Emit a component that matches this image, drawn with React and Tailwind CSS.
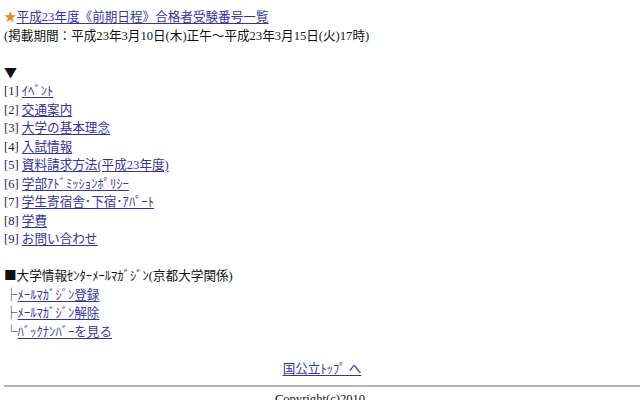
const menu = [
  "ｲﾍﾞﾝﾄ",
  "交通案内",
  "大学の基本理念",
  "入試情報",
  "資料請求方法(平成23年度)",
  "学部ｱﾄﾞﾐｯｼｮﾝﾎﾟﾘｼｰ",
  "学生寄宿舎･下宿･ｱﾊﾟｰﾄ",
  "学費",
  "お問い合わせ",
];

const mail = [
  { mark: "├", label: "ﾒｰﾙﾏｶﾞｼﾞﾝ登録" },
  { mark: "├", label: "ﾒｰﾙﾏｶﾞｼﾞﾝ解除" },
  { mark: "└", label: "ﾊﾞｯｸﾅﾝﾊﾞｰを見る" },
];

const link = "text-[#3434a0] underline underline-offset-2";
const cjk = "leading-none [font-family:'Noto_Sans_CJK_JP',sans-serif]";
const row = "h-[18.5px] whitespace-nowrap";

export default function App() {
  return (
    <div className="h-[400px] w-[640px] overflow-hidden bg-white pt-[8px] text-[12.6px] leading-[18.5px] text-[#111] [font-family:'Liberation_Serif','Noto_Sans_CJK_JP',serif]">
      <div className="pl-[4px]">
        <div className={row}>
          <span className={`text-[#f08a1c] ${cjk}`}>★</span>
          <a href="#" className={link}>平成23年度《前期日程》合格者受験番号一覧</a>
        </div>
        <div className={row}>(掲載期間：平成23年3月10日(木)正午～平成23年3月15日(火)17時)</div>
        <div className="h-[18.5px]" />
        <div className={row}>
          <span className={`text-[13px] ${cjk}`}>▼</span>
        </div>
        {menu.map((m, i) => (
          <div key={m} className={row}>
            <span className="text-[#22225a]">[{i + 1}]</span>{" "}
            <a href="#" className={link}>{m}</a>
          </div>
        ))}
        <div className="h-[18.5px]" />
        <div className={row}>
          <span className={cjk}>■</span>大学情報ｾﾝﾀｰﾒｰﾙﾏｶﾞｼﾞﾝ(京都大学関係)
        </div>
        {mail.map((m) => (
          <div key={m.label} className={`${row} pl-[1px]`}>
            <span className={cjk}>{m.mark}</span>
            <a href="#" className={link}>{m.label}</a>
          </div>
        ))}
        <div className="h-[18.5px]" />
        <div className={`${row} text-center`}>
          <a href="#" className={link}>国公立ﾄｯﾌﾟ へ</a>
        </div>
      </div>
      <hr className="ml-[4px] mt-[7px] border-t-2 border-[#b4b4b4]" />
      <div className="mt-[3px] text-center">Copyright(c)2010</div>
    </div>
  );
}
